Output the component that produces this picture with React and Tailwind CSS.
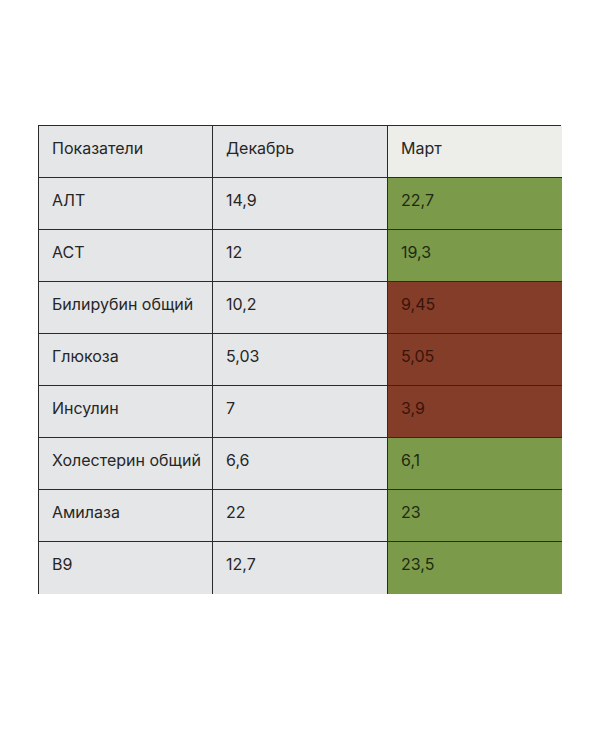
const rows = [
  { name: 'АЛТ', dec: '14,9', mar: '22,7', good: true },
  { name: 'АСТ', dec: '12', mar: '19,3', good: true },
  { name: 'Билирубин общий', dec: '10,2', mar: '9,45', good: false },
  { name: 'Глюкоза', dec: '5,03', mar: '5,05', good: false },
  { name: 'Инсулин', dec: '7', mar: '3,9', good: false },
  { name: 'Холестерин общий', dec: '6,6', mar: '6,1', good: true },
  { name: 'Амилаза', dec: '22', mar: '23', good: true },
  { name: 'B9', dec: '12,7', mar: '23,5', good: true },
];

const cell = 'h-[52px] pl-[13px] pt-[12px] text-[16px] leading-[20px]';

export default function App() {
  return (
    <div className="min-h-[749px] w-[600px] bg-white pl-[38px] pt-[125px] font-['Inter','Liberation_Sans',sans-serif]">
      <div className="grid w-[523px] grid-cols-[174px_175px_174px] border-l border-t border-[#2a2a2a] text-[#262626]">
        <div className={`${cell} border-b border-r border-[#2a2a2a] bg-[#e5e6e8]`}>Показатели</div>
        <div className={`${cell} border-b border-r border-[#2a2a2a] bg-[#e5e6e8]`}>Декабрь</div>
        <div className={`${cell} border-b border-[#2a2a2a] bg-[#edede9]`}>Март</div>
        {rows.map((r, i) => {
          const last = i === rows.length - 1;
          const b = last ? '' : 'border-b';
          return [
            <div key={`${i}a`} className={`${cell} ${b} border-r border-[#2a2a2a] bg-[#e5e6e8]`}>{r.name}</div>,
            <div key={`${i}b`} className={`${cell} ${b} border-r border-[#2a2a2a] bg-[#e5e6e8]`}>{r.dec}</div>,
            <div
              key={`${i}c`}
              className={`${cell} ${b} border-[#2a2a2a] ${r.good ? 'bg-[#7b9b4b] text-[#1e2a12]' : 'bg-[#843d29] text-[#3a1409]'}`}
            >
              {r.mar}
            </div>,
          ];
        })}
      </div>
    </div>
  );
}
